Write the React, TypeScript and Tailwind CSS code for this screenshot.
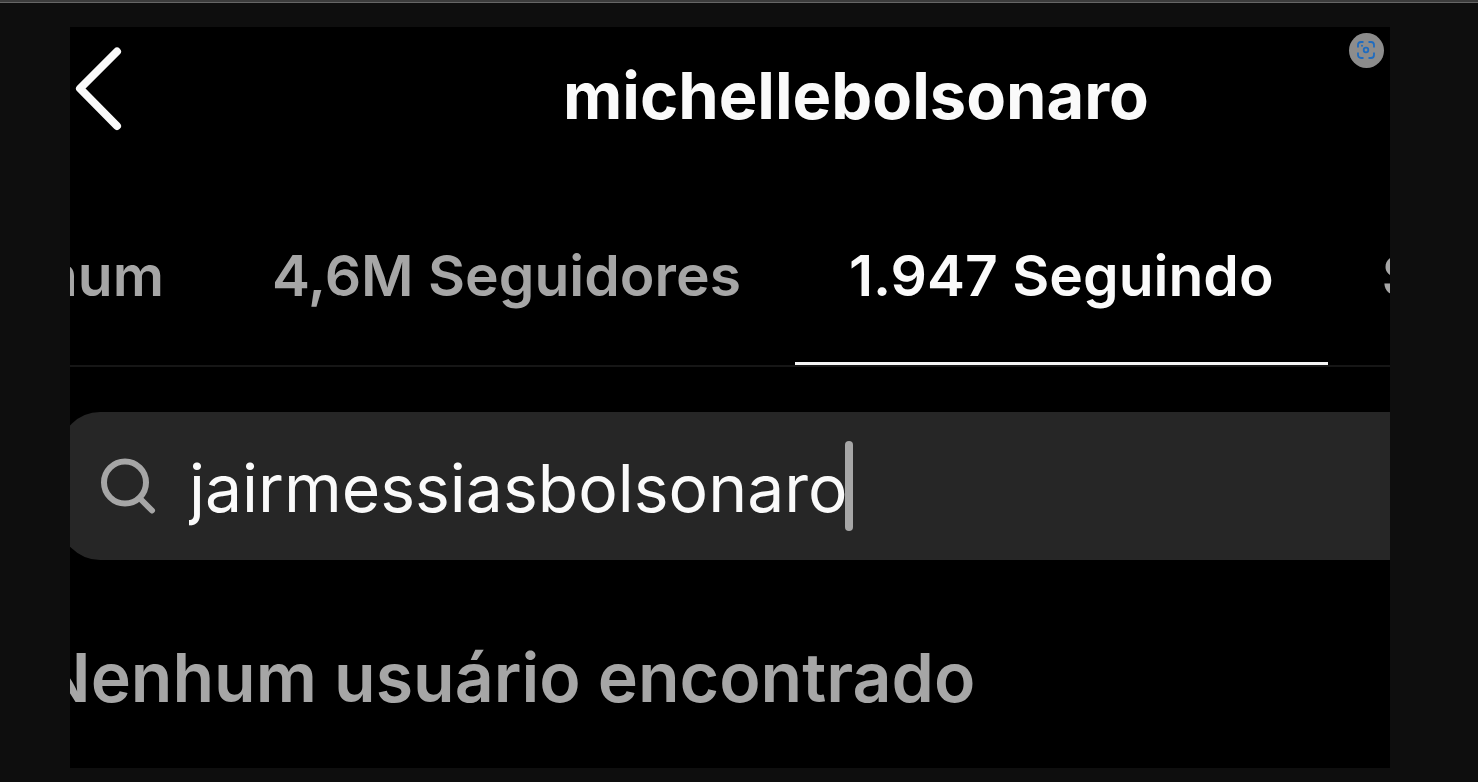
import React, { useState } from "react";

const tabs = [
  { id: "common", label: "em comum", className: "w-[148px] justify-end overflow-hidden" },
  { id: "followers", label: "4,6M Seguidores", className: "" },
  { id: "following", label: "1.947 Seguindo", className: "" },
  { id: "suggested", label: "Sugestões", className: "" },
];

function BackIcon() {
  return (
    <svg width="50" height="86" viewBox="0 0 50 86" fill="none" aria-hidden="true">
      <path d="M45 6.500 8 43.500l37 37.500" stroke="#fafafa" strokeWidth="8" strokeLinecap="round" strokeLinejoin="round" />
    </svg>
  );
}

function SearchIcon() {
  return (
    <svg width="56" height="56" viewBox="0 0 56 56" fill="none" aria-hidden="true">
      <circle cx="24" cy="24.500" r="21" stroke="#a6a6a6" strokeWidth="6" />
      <path d="m38.500 40 12.500 12.500" stroke="#a6a6a6" strokeWidth="6" strokeLinecap="round" />
    </svg>
  );
}

function LensIcon() {
  return (
    <svg width="19" height="19" viewBox="0 0 19 19" fill="none" stroke="#1f6cc0" strokeWidth="1.8" aria-hidden="true">
      <path d="M1 6.500V4a3 3 0 0 1 3-3h2.500M11.500 1H14a3 3 0 0 1 3 3v2.500M17 11.500V14a3 3 0 0 1-3 3h-2.500M6.500 17H4a3 3 0 0 1-3-3v-2.500" />
      <circle cx="9" cy="9" r="2.300" />
      <circle cx="5" cy="4.800" r="1" fill="#1f6cc0" stroke="none" />
    </svg>
  );
}

export default function App() {
  const [active, setActive] = useState("following");
  const [search, setSearch] = useState("jairmessiasbolsonaro");

  return (
    <div
      className="min-h-screen w-full border-t-2 border-[#3c3c3c] bg-[#0e0e0e]"
      style={{ fontFamily: 'Inter, "Noto Sans", sans-serif' }}
    >
      <div className="border-t border-[#666666] pt-6 pr-[88px] pb-3 pl-[70px]">
        <main className="relative overflow-hidden bg-black pb-[47px]">
          {/* Header */}
          <header className="flex items-start pt-[18px]">
            <button type="button" aria-label="Voltar" className="ml-0.5 shrink-0 cursor-pointer">
              <BackIcon />
            </button>
            <h1 className="flex-1 pt-[11px] pl-[200px] text-center text-[65px] leading-[80px] font-bold text-[#fafafa]">
              michellebolsonaro
            </h1>
          </header>

          {/* Tabs */}
          <nav className="mt-[84px] flex border-b-2 border-[#161616]">
            {tabs.map((tab) => (
              <button
                key={tab.id}
                type="button"
                onClick={() => setActive(tab.id)}
                className={`flex shrink-0 cursor-pointer border-b-[3px] px-[54px] pt-4 pb-[46px] text-[57px] leading-[80px] font-semibold whitespace-nowrap ${tab.className} ${
                  active === tab.id ? "border-[#f5f5f5] text-[#fafafa]" : "border-transparent text-[#a6a6a6]"
                }`}
              >
                {tab.label}
              </button>
            ))}
          </nav>

          {/* Search Input */}
          <label className="mt-[45px] -ml-[10px] flex h-[148px] items-center rounded-l-[40px] bg-[#262626] pl-[41px]">
            <SearchIcon />
            <input
              value={search}
              onChange={(e) => setSearch(e.target.value)}
              type="text"
              aria-label="Pesquisar"
              className="ml-8 field-sizing-content pt-1 text-[66px] leading-[88px] text-[#fafafa] caret-transparent outline-none"
            />
            <span className="-ml-[3px] h-[90px] w-2 shrink-0 rounded-full bg-[#a6a6a6]"></span>
          </label>

          {/* Empty state */}
          <p className="mt-[73px] -ml-[31px] text-[68px] leading-[88px] font-semibold whitespace-nowrap text-[#a6a6a6]">
            Nenhum usuário encontrado
          </p>

          <button
            type="button"
            aria-label="Pesquisa visual"
            className="absolute top-1.5 right-1.5 flex size-[35px] cursor-pointer items-center justify-center rounded-full bg-[#8c8c8c]"
          >
            <LensIcon />
          </button>
        </main>
      </div>
    </div>
  );
}
